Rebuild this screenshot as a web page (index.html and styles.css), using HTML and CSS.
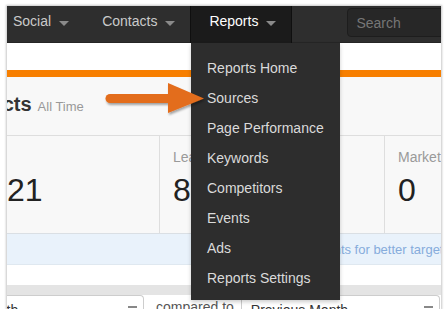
FILE: index.html
```html
<!DOCTYPE html>
<html>
<head>
  <title>Reports</title>
  <link rel="stylesheet" href="styles.css">
</head>
<body>
  <div class="shot">
    <div class="topnav">
      <div class="nav-item">Social<span class="caret"></span></div>
      <div class="nav-item">Contacts<span class="caret"></span></div>
      <div class="nav-item active">Reports<span class="caret"></span></div>
      <div class="nav-search"><input type="text" placeholder="Search"></div>
    </div>

    <div class="page">
      <div class="top-space"></div>
      <div class="orange-bar"></div>

      <div class="heading">
        <span class="heading-title">Contacts</span>
        <span class="heading-sub">All Time</span>
      </div>

      <div class="stats">
        <div class="stat first">
          <div class="stat-label">&nbsp;</div>
          <div class="stat-value">21</div>
        </div>
        <div class="stat">
          <div class="stat-label">Leads</div>
          <div class="stat-value">8</div>
        </div>
        <div class="stat last">
          <div class="stat-label">Marketing Qualified Leads</div>
          <div class="stat-value">0</div>
        </div>
      </div>

      <div class="info">Create segments for better targeting</div>

      <div class="gap"></div>
      <div class="toolbar"></div>

      <div class="filters">
        <div class="select first-select">
          <span>Last Month</span>
          <span class="select-caret"></span>
        </div>
        <span class="compared">compared to</span>
        <div class="select second-select">
          <span>Previous Month</span>
          <span class="select-caret"></span>
        </div>
      </div>
    </div>

    <ul class="dropdown">
      <li>Reports Home</li>
      <li>Sources</li>
      <li>Page Performance</li>
      <li>Keywords</li>
      <li>Competitors</li>
      <li>Events</li>
      <li>Ads</li>
      <li>Reports Settings</li>
    </ul>

    <svg class="arrow" width="110" height="40" viewBox="0 0 110 40">
      <defs>
        <filter id="shadow" x="-10%" y="-20%" width="130%" height="160%">
          <feDropShadow dx="1" dy="2" stdDeviation="1.2" flood-color="#000" flood-opacity="0.35"/>
        </filter>
      </defs>
      <g filter="url(#shadow)" fill="#e36d1c">
        <line x1="7" y1="17.5" x2="68" y2="17.5" stroke="#e36d1c" stroke-width="9" stroke-linecap="round"/>
        <polygon points="65,2 101,17.5 65,32"/>
      </g>
    </svg>
  </div>
</body>
</html>
```

FILE: styles.css
```css
body {
  margin: 0;
  background: #fff;
  font-family: 'Liberation Sans', Arial, sans-serif;
}

.shot {
  position: relative;
  margin: 6px 0 0 7px;
  width: 434px;
  height: 303px;
  overflow: hidden;
  background: #fff;
  box-shadow: 0 0 2px 1px rgba(0,0,0,0.22);
}

/* top navigation */

.topnav {
  display: flex;
  height: 37px;
  background: #2e2e2e;
  border-bottom: 1px solid #252525;
  box-sizing: border-box;
}

.nav-item {
  flex-shrink: 0;
  height: 37px;
  padding: 0 15px 0 18px;
  line-height: 31px;
  font-size: 14px;
  color: #cacaca;
  box-sizing: border-box;
}

.nav-item:first-child {
  margin-left: -12px;
}

.nav-item.active {
  background: #1b1b1b;
  color: #fff;
  border-left: 1px solid #0f0f0f;
  border-right: 1px solid #0f0f0f;
  height: 37px;
}

.caret {
  display: inline-block;
  margin-left: 8px;
  border-left: 5px solid transparent;
  border-right: 5px solid transparent;
  border-top: 5px solid #8a8a8a;
}

.nav-search {
  flex-shrink: 0;
  margin-left: 55px;
  padding-top: 2px;
}

.nav-search input {
  width: 110px;
  height: 29px;
  padding: 0 8px;
  background: #272727;
  border: 1px solid #1d1d1d;
  border-radius: 4px;
  font-family: 'Liberation Sans', Arial, sans-serif;
  font-size: 14px;
  color: #ddd;
  box-sizing: border-box;
}

.nav-search input::placeholder {
  color: #767676;
}

/* page body */

.top-space {
  height: 27px;
  background: #fff;
}

.orange-bar {
  height: 7px;
  background: #f77f00;
}

.heading {
  display: flex;
  align-items: baseline;
  height: 59px;
  padding-top: 16px;
  background: #f8f8f8;
  border-bottom: 1px solid #dedede;
  box-sizing: border-box;
  white-space: nowrap;
}

.heading-title {
  margin-left: -61px;
  font-size: 20px;
  font-weight: bold;
  color: #333;
}

.heading-sub {
  margin-left: 6px;
  font-size: 13px;
  color: #999;
}

.stats {
  display: grid;
  grid-template-columns: 153px 225px 1fr;
  background: #f8f8f8;
}

.stat {
  height: 97px;
  padding: 13px 0 0 13px;
  border-right: 1px solid #dedede;
  box-sizing: border-box;
  white-space: nowrap;
}

.stat.first {
  padding-left: 0;
}

.stat.last {
  border-right: none;
}

.stat-label {
  font-size: 14px;
  line-height: 17px;
  color: #9a9a9a;
}

.stat-value {
  margin-top: 6px;
  font-size: 32px;
  line-height: 37px;
  color: #222;
}

.info {
  height: 32px;
  padding-left: 245px;
  line-height: 31px;
  font-size: 13px;
  color: #86acdc;
  background: #e9f2fb;
  border-top: 1px solid #dadfe4;
  border-bottom: 1px solid #dfe8f0;
  box-sizing: border-box;
  white-space: nowrap;
}

.gap {
  height: 20px;
}

.toolbar {
  height: 10px;
  background: #e4e4e4;
}

.filters {
  display: flex;
  align-items: flex-start;
  white-space: nowrap;
}

.select {
  display: flex;
  justify-content: space-between;
  align-items: center;
  flex-shrink: 0;
  height: 26px;
  padding: 3px 6px 0 9px;
  border: 1px solid #cdcdcd;
  border-bottom: none;
  border-radius: 4px 4px 0 0;
  background: #fff;
  font-size: 14px;
  line-height: 17px;
  color: #333;
  box-sizing: border-box;
}

.first-select {
  width: 205px;
  margin-left: -68px;
}

.second-select {
  width: 199px;
  margin-left: 7px;
}

.select-caret {
  align-self: flex-start;
  margin-top: 7px;
  width: 9px;
  height: 2px;
  background: #888;
}

.compared {
  margin-left: 12px;
  padding-top: 4px;
  font-size: 14px;
  line-height: 17px;
  color: #555;
}

/* reports dropdown */

.dropdown {
  position: absolute;
  left: 184px;
  top: 37px;
  width: 149px;
  margin: 0;
  padding: 10px 0 7px;
  list-style: none;
  background: #2d2d2d;
  box-shadow: 0 2px 4px rgba(0,0,0,0.2);
}

.dropdown li {
  height: 30px;
  padding-left: 16px;
  line-height: 30px;
  font-size: 14px;
  color: #dadada;
  white-space: nowrap;
}

.arrow {
  position: absolute;
  left: 96px;
  top: 75px;
}
```
